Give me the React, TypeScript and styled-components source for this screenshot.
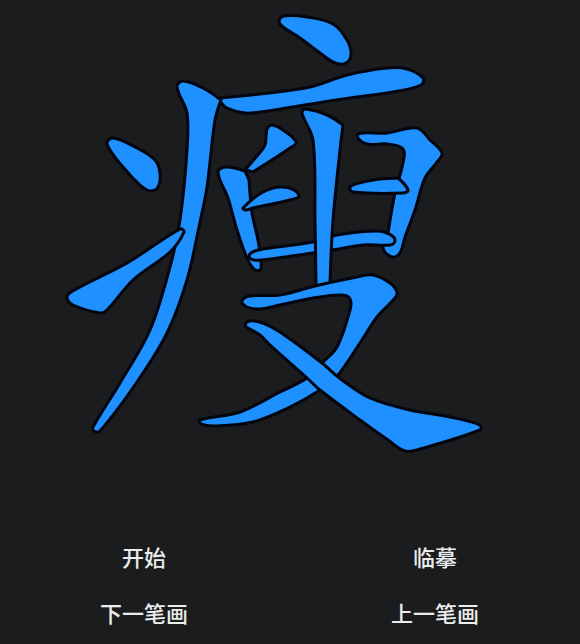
import React from "react";
import styled, { createGlobalStyle } from "styled-components";

const GlobalStyle = createGlobalStyle`
  html, body {
    margin: 0;
    padding: 0;
    background: #1b1c1e;
  }
`;

const Page = styled.div`
  width: 580px;
  height: 644px;
  overflow: hidden;
  display: flex;
  flex-direction: column;
  background: #1b1c1e;
`;

const Canvas = styled.svg`
  display: block;
  width: 580px;
  height: 528px;
  flex: none;
`;

const Stroke = styled.path`
  fill: #1e90ff;
  stroke: #03050f;
  stroke-width: 3;
  stroke-linejoin: round;
`;

const Actions = styled.div`
  display: grid;
  grid-template-columns: 288px 290px;
  grid-auto-rows: 56px;
  column-gap: 2px;
`;

const ActionButton = styled.button`
  border: 0;
  padding: 0;
  background: transparent;
  color: #ececec;
  font-family: "Noto Sans CJK SC", "Noto Sans", sans-serif;
  font-size: 22px;
  font-weight: 500;
  line-height: 1;
`;

// a point is [x, y], a third value marks a sharp corner
type Pt = [number, number, 1?];

// closed smooth outline, handle length follows each segment so uneven spacing stays round
const outline = (pts: Pt[]) => {
  const n = pts.length;
  const direction = (i: number) => {
    const p = pts[i];
    if (p[2]) return [0, 0];
    const a = pts[(i + n - 1) % n];
    const b = pts[(i + 1) % n];
    const dx = b[0] - a[0];
    const dy = b[1] - a[1];
    const len = Math.hypot(dx, dy) || 1;
    return [dx / len, dy / len];
  };
  let d = `M${pts[0][0]},${pts[0][1]}`;
  for (let i = 0; i < n; i++) {
    const j = (i + 1) % n;
    const h = Math.hypot(pts[j][0] - pts[i][0], pts[j][1] - pts[i][1]) / 3;
    const t0 = direction(i);
    const t1 = direction(j);
    d += ` C${(pts[i][0] + t0[0] * h).toFixed(1)},${(pts[i][1] + t0[1] * h).toFixed(1)} ${(pts[j][0] - t1[0] * h).toFixed(1)},${(pts[j][1] - t1[1] * h).toFixed(1)} ${pts[j][0]},${pts[j][1]}`;
  }
  return d + " Z";
};

// strokes in drawing order, later ones sit on top
const strokes: Pt[][] = [
  // top dot
  [[279, 21], [284, 16], [307, 17], [333, 24], [347, 40], [351, 54], [346, 63], [335, 63], [320, 53], [300, 38], [283, 27]],
  // long horizontal
  [[220, 98, 1], [260, 94], [310, 87], [347, 75], [387, 68], [407, 69], [423, 78], [421, 85], [393, 92], [343, 99], [293, 107], [260, 112], [245, 113], [227, 108], [220, 101, 1]],
  // left falling stroke
  [[177, 87], [183, 81], [203, 88], [221, 100, 1], [215, 120], [207, 187], [200, 222], [187, 280], [167, 333], [137, 382], [100, 431], [94, 431], [93, 427], [120, 383], [150, 330], [170, 267], [180, 220], [187, 150], [187, 113]],
  // left dot
  [[107, 144], [113, 138], [137, 148], [155, 160], [160, 173], [158, 187], [150, 191], [140, 185], [123, 167]],
  // rising stroke
  [[184, 232], [180, 229], [127, 263], [71, 292], [67, 298], [73, 305], [100, 313], [107, 310], [133, 280], [170, 252]],
  // 臼 right side
  [[357, 136], [363, 133], [387, 133], [417, 128], [430, 140], [442, 153], [437, 162], [425, 178], [415, 210], [405, 237], [400, 253], [392, 257], [383, 248], [388, 233, 1], [395, 193], [403, 163], [403, 149], [387, 144], [367, 144]],
  // 臼 left side
  [[218, 172], [226, 167], [245, 171, 1], [249, 180, 1], [252, 213], [258, 240], [261, 262], [260, 270], [254, 269], [247, 258], [237, 230], [228, 198]],
  // 臼 lower horizontal
  [[249, 256], [255, 251], [270, 248], [313, 242], [337, 235], [377, 231], [391, 235], [395, 241], [390, 245], [363, 245], [333, 250], [313, 253], [270, 259], [254, 260]],
  // 臼 top-left stroke
  [[267, 129], [272, 125], [283, 130], [296, 142], [290, 148], [253, 172, 1], [245, 170, 1], [256, 157], [265, 145]],
  // 臼 inner left bar
  [[243, 208], [263, 192], [283, 187], [299, 195], [290, 200], [253, 208], [246, 210]],
  // 臼 inner right bar
  [[350, 187], [363, 182], [380, 179], [398, 178, 1], [408, 190], [403, 193], [353, 192]],
  // centre vertical
  [[302, 113], [305, 109], [327, 115], [343, 125, 1], [340, 150], [333, 220], [330, 283, 1], [316, 286, 1], [315, 220], [313, 140]],
  // 又 top and falling sweep
  [[242, 301], [250, 296], [280, 295], [315, 286], [357, 277], [373, 275], [390, 283], [397, 292], [395, 298], [377, 317], [360, 343], [338, 375], [320, 390], [290, 407], [253, 422], [215, 426], [201, 424], [200, 420], [240, 412], [280, 392], [307, 378], [322, 363], [337, 347], [350, 310], [350, 299], [342, 295], [313, 298], [280, 305], [260, 309], [247, 307]],
  // 又 long sweep
  [[245, 325], [250, 321], [263, 323], [280, 332], [322, 363], [338, 377], [370, 398], [410, 410], [450, 417], [480, 425], [480, 430], [420, 449], [405, 451], [388, 440], [360, 420], [320, 390], [307, 378], [270, 345], [260, 335], [248, 328]],
];

const actions = ["开始", "临摹", "下一笔画", "上一笔画"];

export default function App() {
  return (
    <Page>
      <GlobalStyle />
      <Canvas viewBox="0 0 580 528">
        {strokes.map((pts, i) => (
          <Stroke d={outline(pts)} key={i} />
        ))}
      </Canvas>
      <Actions>
        {actions.map((label) => (
          <ActionButton key={label}>{label}</ActionButton>
        ))}
      </Actions>
    </Page>
  );
}
